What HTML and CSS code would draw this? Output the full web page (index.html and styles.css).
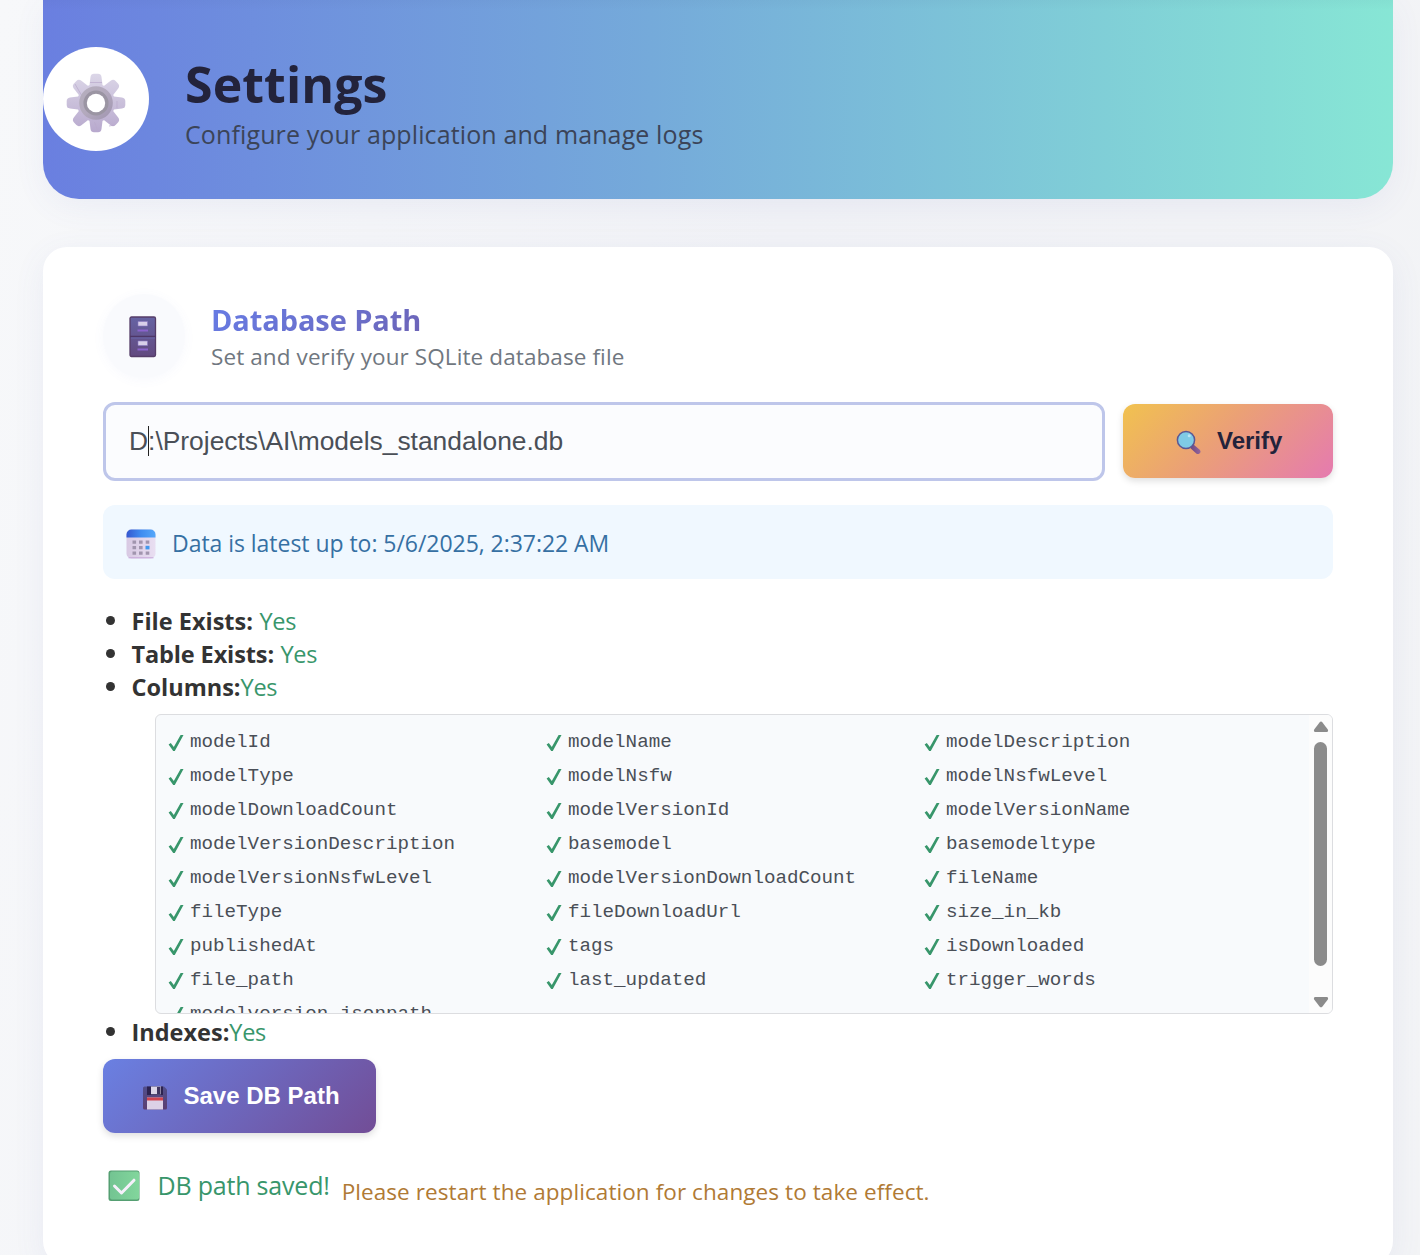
FILE: index.html
```html
<!DOCTYPE html>
<html lang="en">
<head>
<meta charset="utf-8">
<title>Settings</title>
<link rel="stylesheet" href="styles.css">
</head>
<body>
<svg class="defs" width="0" height="0" aria-hidden="true">
  <defs>
    <linearGradient id="gearBody" gradientUnits="userSpaceOnUse" x1="0" y1="0" x2="0" y2="60"><stop offset="0" stop-color="#dcd7e8"/><stop offset="1" stop-color="#b7a8cd"/></linearGradient>
    <linearGradient id="gearRing" x1="0" y1="0" x2="1" y2="1"><stop offset="0" stop-color="#b5afbd"/><stop offset=".5" stop-color="#b3a9bd"/><stop offset="1" stop-color="#9f94b0"/></linearGradient>
    <linearGradient id="cabinet" x1="0" y1="0" x2="0" y2="1"><stop offset="0" stop-color="#6663a3"/><stop offset="1" stop-color="#62497f"/></linearGradient>
    <linearGradient id="calTop"><stop offset="0" stop-color="#3458d0"/><stop offset=".5" stop-color="#3f8cf0"/><stop offset="1" stop-color="#55a8fa"/></linearGradient>
    <linearGradient id="calBody"><stop offset="0" stop-color="#d8c9e3"/><stop offset="1" stop-color="#e9dff2"/></linearGradient>
    <linearGradient id="handle"><stop offset="0" stop-color="#6c4880"/><stop offset="1" stop-color="#96659c"/></linearGradient>
    <linearGradient id="disk" x1="0" y1="0" x2="0" y2="1"><stop offset="0" stop-color="#514f8c"/><stop offset="1" stop-color="#5b3e71"/></linearGradient>
    <linearGradient id="tickBox"><stop offset="0" stop-color="#73c492"/><stop offset="1" stop-color="#82d69c"/></linearGradient>
    <symbol id="tick" viewBox="0 0 16 18"><path d="M.6 10.400 2.800 9l3 3.900L12.600 1h2.900L6.800 17H5.200z" fill="#38966b"/></symbol>
    <path id="tooth" d="M21 19 24.300 4Q25 .7 28 .7H32Q35 .7 35.700 4L39 19z"/>
  </defs>
</svg>
<main class="page">
  <header class="hero">
    <div class="hero-icon">
      <svg width="60" height="60" viewBox="0 0 60 60">
        <g fill="url(#gearBody)">
          <circle cx="30" cy="30" r="19"/>
          <path d="M23 16 24.500 4Q25 .7 28 .7H32Q35 .7 35.500 4L37 16z"/>
          <path d="M23 44 24.500 56Q25 59.300 28 59.300H32Q35 59.300 35.500 56L37 44z"/>
          <path d="M16 23 4 24.500Q.7 25 .7 28V32Q.7 35 4 35.500L16 37z"/>
          <path d="M44 23 56 24.500Q59.300 25 59.300 28V32Q59.300 35 56 35.500L44 37z"/>
          <path d="M15.200 25 7.800 15.400Q5.800 12.600 8 10.400L10.400 8Q12.600 5.800 15.400 7.800L25 15.200z"/>
          <path d="M44.800 25 52.200 15.400Q54.200 12.600 52 10.400L49.600 8Q47.400 5.800 44.600 7.800L35 15.200z"/>
          <path d="M15.200 35 7.800 44.600Q5.800 47.400 8 49.600L10.400 52Q12.600 54.200 15.400 52.200L25 44.800z"/>
          <path d="M44.800 35 52.200 44.600Q54.200 47.400 52 49.600L49.600 52Q47.400 54.200 44.600 52.200L35 44.800z"/>
        </g>
        <path d="M9 11l7 12M24 9.500h12M51 28v7M28.500 49l3 8M43 53l6-1" stroke="#b9a9cc" stroke-width=".7" fill="none"/>
        <circle cx="30" cy="30" r="16.800" fill="url(#gearRing)"/>
        <circle cx="30" cy="30" r="10.800" fill="none" stroke="#9b95a3" stroke-width="3.500"/>
        <circle cx="30" cy="30" r="9.200" fill="#fff"/>
      </svg>
    </div>
    <div>
      <h1 class="hero-title">Settings</h1>
      <p class="hero-sub">Configure your application and manage logs</p>
    </div>
  </header>

  <section class="card">
    <div class="card-head">
      <div class="card-icon">
        <svg width="28" height="42" viewBox="0 0 28 42">
          <rect x="1" y="1" width="25.500" height="39.500" rx="1.500" fill="url(#cabinet)" stroke="#553d68" stroke-width="1.300"/>
          <path d="M1 20.500h26" stroke="#4e3767" stroke-width="1.500"/>
          <path d="M2 22h24" stroke="#6967a8"/>
          <path d="M9 5.500h9.500v4.500H9zM9 25h9.500v4.500H9z" fill="#d8cfe9" stroke="#8b79c2" stroke-width=".6"/>
          <path d="M8.500 14.500h10.500M8.500 33.500h10.500" stroke="#8a63cc" stroke-width="1.800"/>
        </svg>
      </div>
      <div>
        <h2 class="card-title">Database Path</h2>
        <p class="card-sub">Set and verify your SQLite database file</p>
      </div>
    </div>

    <div class="path-row">
      <div class="path-input"><span>D</span><i class="caret"></i><span>:\Projects\AI\models_standalone.db</span></div>
      <button class="btn btn-verify">
        <svg width="26" height="26" viewBox="0 0 26 26">
          <path d="m14.500 17 3-2.500 6.500 5.500q1.500 2-.5 3.600-1.900 1.200-3.500-.4l-5.500-5z" fill="url(#handle)"/>
          <circle cx="10" cy="10" r="8.600" fill="#7fcbe6" stroke="#5a5794" stroke-width="1.500"/>
          <circle cx="13.200" cy="5.800" r="1.500" fill="#b9e6f5"/>
        </svg>
        <span>Verify</span>
      </button>
    </div>

    <div class="notice">
      <svg width="30" height="30" viewBox="0 0 30 30">
        <rect x=".5" y=".5" width="29" height="29" rx="5" fill="url(#calBody)"/>
        <path d="M2.500 28.800h25" stroke="#c7a6d9" stroke-width="1"/>
        <path d="M.5 8.500v-3a5 5 0 0 1 5-5h19a5 5 0 0 1 5 5v3z" fill="url(#calTop)"/>
        <path d="M6.500 11.500h3.600v3.200H6.500zm6.500 0h3.600v3.200H13zm6.700 0h3.600v3.200h-3.600zM6.500 17h3.600v3.200H6.500zM13 17h3.600v3.200H13zM6.500 22.500h3.600v3.200H6.500zm6.500 0h3.600v3.200H13zm6.700 0h3.600v3.200h-3.600z" fill="#a195ae"/>
        <path d="M19.500 16.800h4v3.600h-4z" fill="#4299ee"/>
      </svg>
      <span class="notice-text">Data is latest up to: 5/6/2025, 2:37:22 AM</span>
    </div>

    <ul class="checks">
      <li><b>File Exists:</b><span class="yes spaced">Yes</span></li>
      <li><b class="tight">Table Exists:</b><span class="yes spaced">Yes</span></li>
      <li><b>Columns:</b><span class="yes">Yes</span></li>
    </ul>
    <div class="columns-box">
      <div class="columns-grid">
        <span><svg><use href="#tick"/></svg>modelId</span><span><svg><use href="#tick"/></svg>modelName</span><span><svg><use href="#tick"/></svg>modelDescription</span>
        <span><svg><use href="#tick"/></svg>modelType</span><span><svg><use href="#tick"/></svg>modelNsfw</span><span><svg><use href="#tick"/></svg>modelNsfwLevel</span>
        <span><svg><use href="#tick"/></svg>modelDownloadCount</span><span><svg><use href="#tick"/></svg>modelVersionId</span><span><svg><use href="#tick"/></svg>modelVersionName</span>
        <span><svg><use href="#tick"/></svg>modelVersionDescription</span><span><svg><use href="#tick"/></svg>basemodel</span><span><svg><use href="#tick"/></svg>basemodeltype</span>
        <span><svg><use href="#tick"/></svg>modelVersionNsfwLevel</span><span><svg><use href="#tick"/></svg>modelVersionDownloadCount</span><span><svg><use href="#tick"/></svg>fileName</span>
        <span><svg><use href="#tick"/></svg>fileType</span><span><svg><use href="#tick"/></svg>fileDownloadUrl</span><span><svg><use href="#tick"/></svg>size_in_kb</span>
        <span><svg><use href="#tick"/></svg>publishedAt</span><span><svg><use href="#tick"/></svg>tags</span><span><svg><use href="#tick"/></svg>isDownloaded</span>
        <span><svg><use href="#tick"/></svg>file_path</span><span><svg><use href="#tick"/></svg>last_updated</span><span><svg><use href="#tick"/></svg>trigger_words</span>
        <span><svg><use href="#tick"/></svg>modelversion_jsonpath</span>
      </div>
      <div class="scrollbar">
        <svg width="16" height="12" viewBox="0 0 16 12"><path d="M6.500 1.400q1.500-1.600 3 0l5.300 7.200q1 2.400-1.300 2.400h-11q-2.300 0-1.300-2.400z" fill="#8b8b8b"/></svg>
        <div class="thumb"></div>
        <svg class="down" width="16" height="12" viewBox="0 0 16 12"><path d="M6.500 10.600q1.500 1.600 3 0l5.300-7.200q1-2.400-1.300-2.400h-11q-2.300 0-1.300 2.400z" fill="#8b8b8b"/></svg>
      </div>
    </div>
    <ul class="checks">
      <li><b>Indexes:</b><span class="yes">Yes</span></li>
    </ul>

    <button class="btn btn-save">
      <svg width="24" height="24" viewBox="0 0 24 24">
        <path d="M1.500.5h19.500l3 3V22q0 1.500-1.500 1.500h-21Q0 23.500 0 22V2Q0 .5 1.500.5z" fill="url(#disk)"/>
        <path d="M4 .5h16v8.500H4z" fill="#2d2350"/>
        <path d="M8 .5h10v7.700H8z" fill="#dbd5e7"/>
        <path d="M14 1h3.500v7H14z" fill="#40355f"/>
        <path d="M4 11.500h16v12H4z" fill="#dcd1e7"/>
        <path d="M4 11.500h16v3H4z" fill="#d0444f"/>
      </svg>
      <span>Save DB Path</span>
    </button>

    <div class="status">
      <svg width="32" height="32" viewBox="0 0 32 32">
        <rect x=".5" y=".5" width="31" height="30.500" rx="2.500" fill="#559f72"/>
        <rect x="2" y="1.500" width="29" height="28" rx="2" fill="url(#tickBox)"/>
        <path d="m6.500 16 7 7L26 10.200" fill="none" stroke="#f6f0fb" stroke-width="3" stroke-linecap="round" stroke-linejoin="round"/>
      </svg>
      <span class="saved">DB path saved!</span>
      <span class="restart">Please restart the application for changes to take effect.</span>
    </div>
  </section>
</main>
</body>
</html>
```
FILE: styles.css
```css
* { box-sizing: border-box; }
body {
  margin: 0;
  height: 1255px;
  overflow: hidden;
  background: linear-gradient(100deg, #f7f8fa 0%, #f1f2f6 50%, #f3f4f6 100%);
  font-family: "Open Sans", "Noto Sans", sans-serif;
  color: #333;
}
h1, h2, p, ul { margin: 0; padding: 0; }
svg { display: block; flex: none; }
.defs { position: absolute; }
.page { padding: 0 27px 0 43px; }

.hero {
  display: flex;
  gap: 36px;
  height: 199px;
  padding-top: 47px;
  border-radius: 0 0 36px 36px;
  background:
    linear-gradient(rgba(40, 50, 90, .03), rgba(40, 50, 90, 0) 10px),
    linear-gradient(90deg, #6a7fe0 0%, #75aada 45%, #87e6d5 100%);
  box-shadow: 0 8px 32px rgba(90, 100, 180, .07);
}
.hero-icon {
  display: flex;
  align-items: center;
  justify-content: center;
  width: 106px;
  height: 104px;
  padding-top: 8px;
  padding-right: 1px;
  border-radius: 50%;
  background: #fff;
}
.hero-title {
  margin-top: 7px;
  font-size: 50px;
  line-height: 60px;
  font-weight: 700;
  letter-spacing: .1px;
  color: #23233b;
}
.hero-sub {
  margin-top: 3px;
  font-size: 25px;
  line-height: 34px;
  letter-spacing: .12px;
  color: #3b4458;
}

.card {
  height: 1018px;
  margin-top: 48px;
  padding: 47px 60px 0;
  border-radius: 24px;
  background: #fff;
  box-shadow: 0 8px 32px rgba(90, 100, 180, .08);
}
.card-head { display: flex; gap: 26px; height: 84px; }
.card-icon {
  display: flex;
  align-items: center;
  justify-content: center;
  width: 82px;
  height: 84px;
  padding: 1px 2px 0 0;
  border-radius: 50%;
  background: #f9fafd;
  box-shadow: 0 2px 12px rgba(100, 120, 220, .05);
}
.card-title {
  width: max-content;
  margin-top: 6px;
  font-size: 29px;
  line-height: 40px;
  font-weight: 700;
  letter-spacing: -.1px;
  color: transparent;
  background: linear-gradient(135deg, #667eea -10%, #6b6cc4 75%, #6d62b5 100%);
  -webkit-background-clip: text;
  background-clip: text;
}
.card-sub { font-size: 22.500px; line-height: 34px; letter-spacing: .1px; color: #707780; }

.path-row { display: flex; align-items: center; gap: 18px; margin-top: 24px; }
.path-input {
  display: flex;
  align-items: center;
  flex: 1;
  height: 79px;
  padding-left: 23px;
  border: 3px solid #bec6ea;
  border-radius: 12px;
  background: #fbfcfe;
  font: 26.400px "Liberation Sans", Arial, sans-serif;
  color: #4a4f57;
}
.caret { width: 1px; height: 30px; margin: -2px -1px 0 0; background: #222; }
.btn {
  display: flex;
  align-items: center;
  height: 74px;
  padding: 0;
  border: 0;
  border-radius: 12px;
  box-shadow: 0 3px 7px rgba(0, 0, 0, .13);
  font: bold 24px "Liberation Sans", Arial, sans-serif;
}
.btn-verify {
  gap: 15px;
  width: 210px;
  margin-bottom: 1px;
  padding-left: 53px;
  background: linear-gradient(135deg, #f1c24f 0%, #eba076 45%, #e57ab0 100%);
  color: #23233b;
}
.btn-verify svg { margin-top: 4px; }

.notice {
  display: flex;
  align-items: center;
  gap: 16px;
  height: 74px;
  margin-top: 24px;
  padding-left: 23px;
  border-radius: 12px;
  background: #f0f8ff;
  color: #3670a3;
}
.notice svg { margin-top: 4px; }
.notice-text { font-size: 23px; padding-top: 1px; letter-spacing: -.04px; }

.checks { list-style: none; font-size: 23.500px; line-height: 33px; }
.notice + .checks { margin-top: 26px; }
.checks li { display: flex; align-items: center; height: 33px; }
.checks li::before {
  content: "";
  width: 9px;
  height: 9px;
  margin: 0 16.500px 2px 3px;
  border-radius: 50%;
  background: #333;
}
.tight { letter-spacing: -.12px; }
.yes { color: #38966b; letter-spacing: -.3px; }
.spaced { margin-left: 6.500px; }

.columns-box {
  display: flex;
  height: 300px;
  margin: 10px 0 2px 52px;
  overflow: hidden;
  border: 1px solid #dcdde0;
  border-radius: 6px;
  background: #f8fafc;
}
.columns-grid {
  display: grid;
  grid-template-columns: 378px 378px 1fr;
  grid-auto-rows: 34px;
  flex: 1;
  padding: 10px 0 0 12px;
  font: 19.220px/34px "Liberation Mono", monospace;
  color: #4a4f57;
}
.columns-grid span { display: flex; align-items: center; gap: 6px; }
.columns-grid svg { width: 16px; height: 18px; margin-top: 1px; }
.scrollbar {
  display: flex;
  flex-direction: column;
  align-items: center;
  width: 23px;
  padding: 6px 0 5px;
  background: #fcfcfc;
}
.thumb { width: 13px; height: 224px; margin-top: 9px; border-radius: 7px; background: #8b8b8b; }
.down { margin-top: auto; }

.btn-save {
  gap: 16.500px;
  width: 273px;
  margin-top: 10px;
  padding-left: 40px;
  background: linear-gradient(135deg, #6a80e2 0%, #6d67bd 50%, #724d96 100%);
  color: #fff;
}
.btn-save svg { margin-top: 3px; }

.status { display: flex; align-items: center; height: 40px; margin-top: 33px; padding-left: 5px; }
.saved { margin: -2px 0 0 17.500px; font-size: 25px; letter-spacing: -.2px; color: #38966b; }
.restart { margin: 10px 0 0 12px; font-size: 22.500px; letter-spacing: .08px; color: #b07a35; }
```
